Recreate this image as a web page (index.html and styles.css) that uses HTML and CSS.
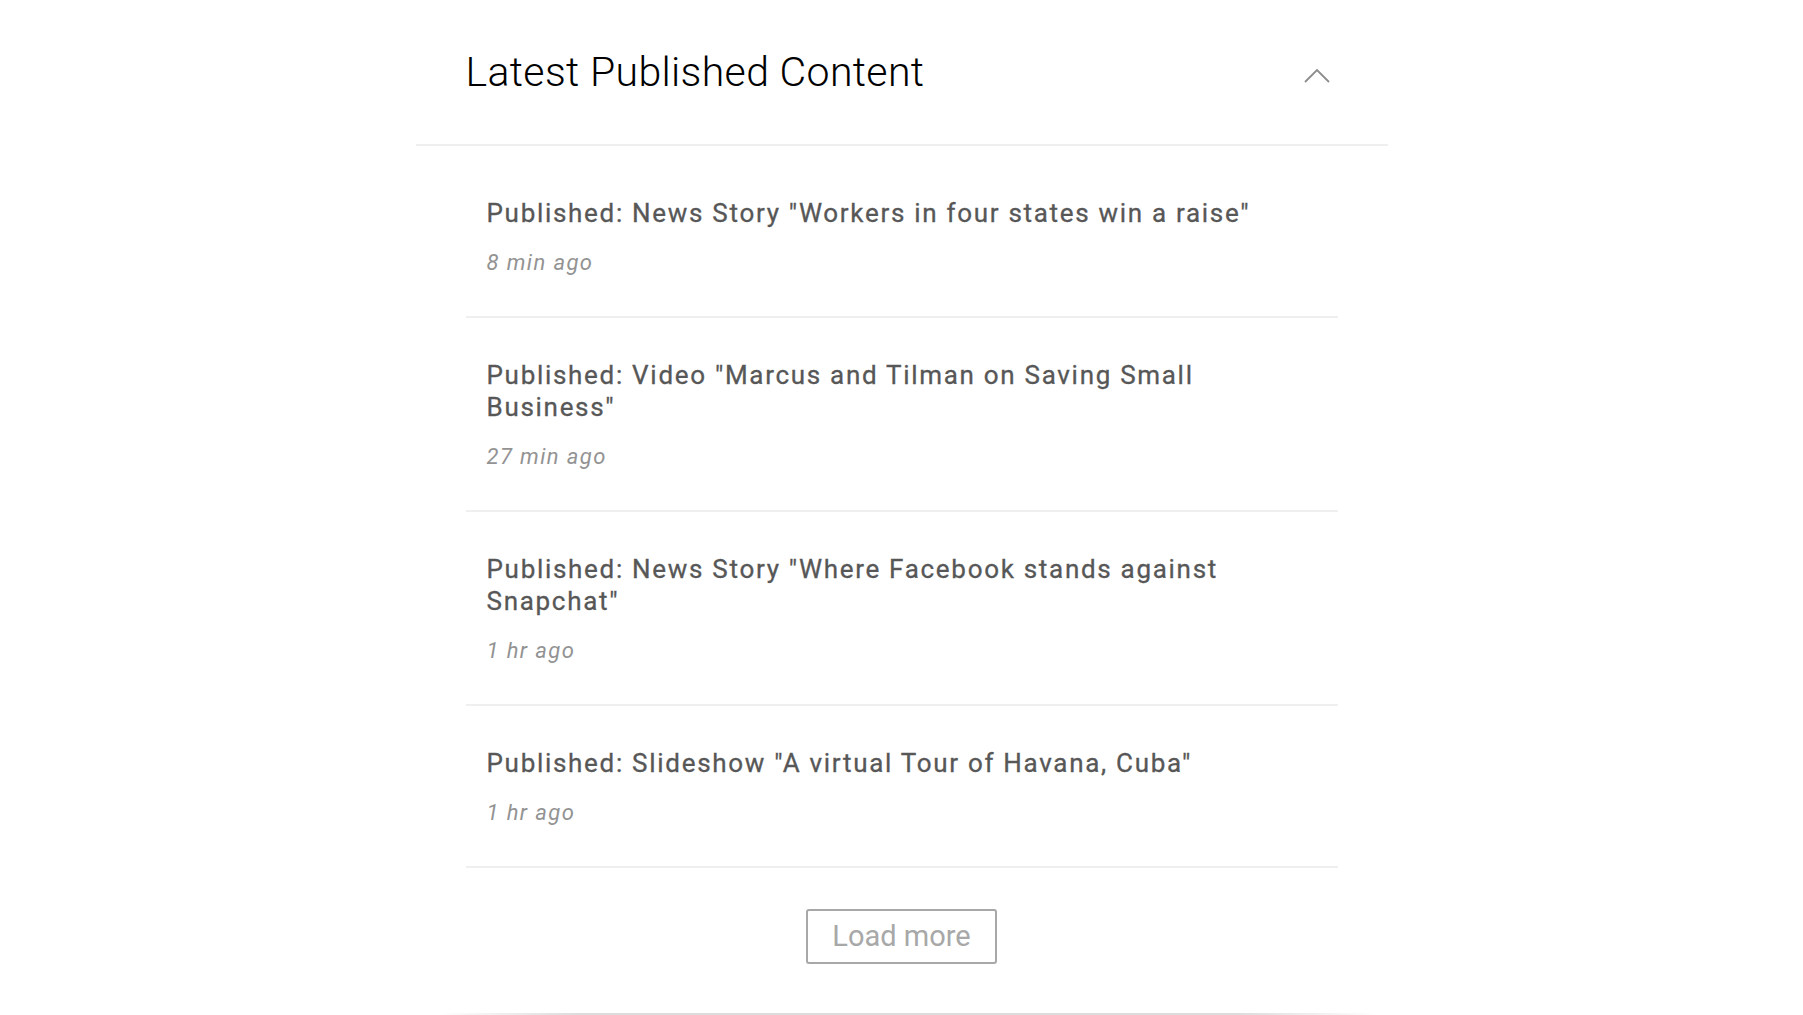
FILE: index.html
```html
<!DOCTYPE html>
<html>
<head>
<meta charset="utf-8">
<link rel="stylesheet" href="styles.css">
</head>
<body>
<section class="panel">
  <header class="panel-head">
    <h1 class="panel-title">Latest Published Content</h1>
    <svg class="chevron" width="26" height="15" viewBox="0 0 26 15"><path d="M1 14 L13 2 L25 14" fill="none" stroke="#8c8c8c" stroke-width="1.8"/></svg>
  </header>
  <ul class="feed">
    <li class="feed-item">
      <div class="feed-title">Published: News Story "Workers in four states win a raise"</div>
      <div class="feed-time">8 min ago</div>
    </li>
    <li class="feed-item">
      <div class="feed-title">Published: Video "Marcus and Tilman on Saving Small Business"</div>
      <div class="feed-time">27 min ago</div>
    </li>
    <li class="feed-item">
      <div class="feed-title">Published: News Story "Where Facebook stands against Snapchat"</div>
      <div class="feed-time">1 hr ago</div>
    </li>
    <li class="feed-item">
      <div class="feed-title">Published: Slideshow "A virtual Tour of Havana, Cuba"</div>
      <div class="feed-time">1 hr ago</div>
    </li>
  </ul>
  <div class="more">
    <button class="more-btn">Load more</button>
  </div>
  <div class="panel-edge"></div>
</section>
</body>
</html>
```
FILE: styles.css
```css
* { box-sizing: border-box; }
html, body {
  margin: 0;
  padding: 0;
  background: #fff;
  font-family: Roboto, "Liberation Sans", sans-serif;
}
.panel {
  width: 972px;
  margin: 0 auto;
}
.panel-head {
  display: flex;
  align-items: center;
  justify-content: space-between;
  padding: 48px 58px 48px 50px;
  border-bottom: 2px solid #efefef;
}
.panel-title {
  margin: 0;
  font-size: 41px;
  line-height: 48px;
  font-weight: 300;
  letter-spacing: 0.35px;
  color: #000;
}
.chevron {
  display: block;
  margin-top: 6px;
}
.feed {
  list-style: none;
  margin: 0 50px;
  padding: 10px 0 0;
}
.feed-item {
  padding: 41px 51px 38px 21px;
  border-bottom: 2px solid #efefef;
}
.feed-title {
  font-size: 26px;
  line-height: 32px;
  font-weight: 400;
  letter-spacing: 1.7px;
  color: #575757;
  -webkit-text-stroke: 0.3px #575757;
}
.feed-time {
  margin-top: 19px;
  font-size: 22px;
  line-height: 30px;
  letter-spacing: 1.4px;
  font-style: italic;
  color: #939393;
}
.more {
  display: flex;
  justify-content: center;
  padding: 41px 0 49px;
}
.more-btn {
  font-family: Roboto, "Liberation Sans", sans-serif;
  font-size: 29px;
  line-height: 51px;
  height: 55px;
  padding: 0 24px;
  color: #a8a8a8;
  background: #fff;
  border: 2px solid #a8a8a8;
  border-radius: 3px;
}
.panel-edge {
  height: 2px;
  margin: 0 10px 0 20px;
  background: linear-gradient(to right, rgba(220,220,220,0), #dcdcdc 15%, #dcdcdc 85%, rgba(220,220,220,0));
}
```
